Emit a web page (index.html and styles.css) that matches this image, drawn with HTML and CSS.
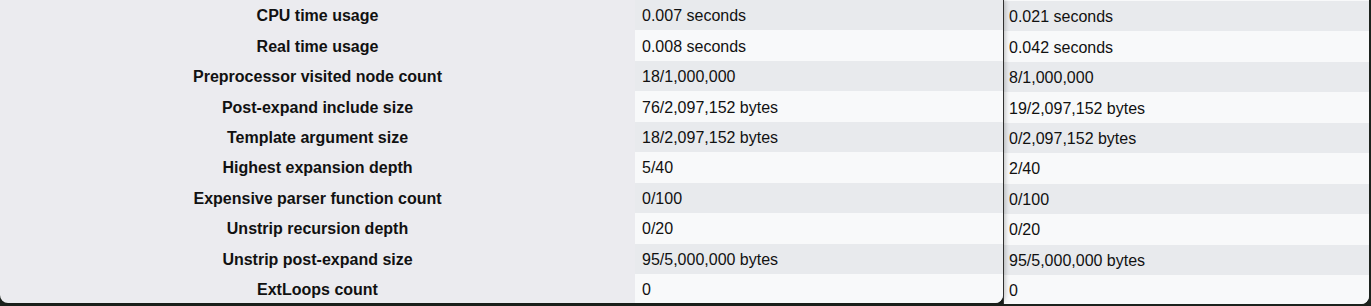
FILE: index.html
```html
<!DOCTYPE html>
<html>
<head>
<meta charset="utf-8">
<link rel="stylesheet" href="styles.css">
</head>
<body>
<div class="desk">
  <div class="win win-left">
    <div class="table">
      <div class="th">CPU time usage</div><div class="td">0.007 seconds</div>
      <div class="th">Real time usage</div><div class="td">0.008 seconds</div>
      <div class="th">Preprocessor visited node count</div><div class="td">18/1,000,000</div>
      <div class="th">Post-expand include size</div><div class="td">76/2,097,152 bytes</div>
      <div class="th">Template argument size</div><div class="td">18/2,097,152 bytes</div>
      <div class="th">Highest expansion depth</div><div class="td">5/40</div>
      <div class="th">Expensive parser function count</div><div class="td">0/100</div>
      <div class="th">Unstrip recursion depth</div><div class="td">0/20</div>
      <div class="th">Unstrip post-expand size</div><div class="td">95/5,000,000 bytes</div>
      <div class="th">ExtLoops count</div><div class="td">0</div>
    </div>
  </div>
  <div class="win win-right">
    <div class="list">
      <div class="td">0.021 seconds</div>
      <div class="td">0.042 seconds</div>
      <div class="td">8/1,000,000</div>
      <div class="td">19/2,097,152 bytes</div>
      <div class="td">0/2,097,152 bytes</div>
      <div class="td">2/40</div>
      <div class="td">0/100</div>
      <div class="td">0/20</div>
      <div class="td">95/5,000,000 bytes</div>
      <div class="td">0</div>
    </div>
  </div>
</div>
</body>
</html>
```

FILE: styles.css
```css
html, body {
  margin: 0;
  padding: 0;
  background: #1c221d;
  overflow: hidden;
}
body {
  width: 1371px;
  height: 306px;
  font-family: "Liberation Sans", Arial, sans-serif;
  font-size: 16px;
  color: #202122;
}
.desk {
  display: flex;
  align-items: flex-start;
  width: 1369px;
}
.win {
  overflow: hidden;
}
.win-left {
  width: 1003px;
  height: 303px;
  border-radius: 0 0 8px 8px;
  background: #ebebef;
  position: relative;
  z-index: 2;
  box-shadow: 2px 0 5px rgba(0, 0, 0, 0.25);
}
.win-right {
  flex: 1;
  height: 304px;
  border-left: 1px solid #3a3a3a;
  border-radius: 0 0 8px 0;
  background: #f8f9fa;
  padding-top: 1px;
  box-sizing: border-box;
}
.table {
  display: grid;
  grid-template-columns: 635px 1fr;
  grid-auto-rows: 30.45px;
}
.th {
  font-weight: bold;
  text-align: center;
  display: flex;
  align-items: center;
  justify-content: center;
  padding-top: 2px;
  box-sizing: border-box;
  color: #111;
}
.td {
  display: flex;
  align-items: center;
  padding-left: 7px;
  padding-top: 2px;
  box-sizing: border-box;
  color: #111;
}
.table .td:nth-child(4n+2) {
  background: #e8eaed;
}
.table .td:nth-child(4n) {
  background: #f8f9fa;
}
.list {
  display: grid;
  grid-auto-rows: 30.45px;
}
.list .td {
  padding-left: 5px;
}
.list .td:nth-child(odd) {
  background: #e8eaed;
}
.list .td:nth-child(even) {
  background: #f8f9fa;
}
```
